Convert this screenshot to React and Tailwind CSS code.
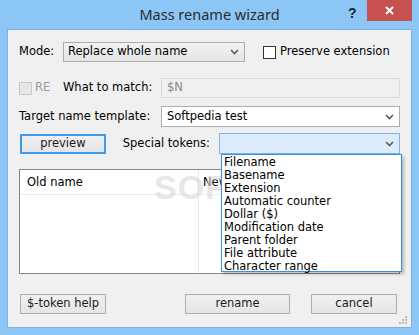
import React from 'react';

const font = { fontFamily: '"DejaVu Sans", Verdana, sans-serif' };

const Chevron = ({ className = '' }) => (
  <svg width="9" height="6" viewBox="0 0 9 6" className={className}>
    <path d="M1 1 L4.5 4.5 L8 1" fill="none" stroke="#5a5a5a" strokeWidth="1.6" />
  </svg>
);

const Check = ({ disabled }) => (
  <span
    className={`w-[13px] h-[13px] shrink-0 border ${disabled ? 'border-[#c8c8c8] bg-[#e6e6e6]' : 'border-[#333] bg-white'}`}
  />
);

const Btn = ({ children, className = '', focus }) => (
  <button
    className={`h-5 flex items-center justify-center text-[#1a1a1a] bg-gradient-to-b from-[#f0f0f0] to-[#e5e5e5] ${
      focus ? 'border-2 border-[#3c9af5]' : 'border border-[#adadad]'
    } ${className}`}
  >
    {children}
  </button>
);

const tokens = [
  'Filename',
  'Basename',
  'Extension',
  'Automatic counter',
  'Dollar ($)',
  'Modification date',
  'Parent folder',
  'File attribute',
  'Character range',
];

export default function App() {
  return (
    <div className="w-[419px] h-[335px] bg-[#8cc6f7] flex flex-col text-[11.5px] text-black overflow-hidden" style={font}>
      <div className="relative h-[29px] shrink-0 flex items-center justify-center">
        <span className="text-[14.5px] text-[#2b2b2b] mt-[1px]" style={{ fontFamily: '"Noto Sans", "Open Sans", sans-serif' }}>
          Mass rename wizard
        </span>
        <span className="absolute left-[348px] top-[3px] text-[14px] font-bold text-[#222]" style={{ fontFamily: '"Liberation Sans", Arial, sans-serif' }}>
          ?
        </span>
        <div className="absolute left-[367px] top-0 w-[45px] h-[21px] bg-[#c75050] flex items-center justify-center">
          <svg width="9" height="9" viewBox="0 0 9 9">
            <path d="M1 1 L8 8 M8 1 L1 8" stroke="#fff" strokeWidth="2" />
          </svg>
        </div>
      </div>

      <div className="relative mx-[7px] h-[299px] border border-[#7bb1e3] bg-[#f0f0f0] px-[11px] pt-[12px] flex flex-col">
        {/* Row 1 */}
        <div className="flex items-center h-5">
          <span className="w-[44px]">Mode:</span>
          <div className="w-[182px] h-5 border border-[#acacac] bg-gradient-to-b from-[#f2f2f2] to-[#e5e5e5] flex items-center justify-between pl-[4px] pr-[5px]">
            <span>Replace whole name</span>
            <Chevron />
          </div>
          <div className="flex items-center ml-[18px] gap-[4px]">
            <Check />
            <span>Preserve extension</span>
          </div>
        </div>

        {/* Row 2 */}
        <div className="flex items-center h-5 mt-4">
          <Check disabled />
          <span className="ml-[3px] w-[28px] text-[#9a9a9a]">RE</span>
          <span className="w-[98px]">What to match:</span>
          <div className="w-[239px] h-5 border border-[#d9d9d9] bg-[#f0f0f0] flex items-center pl-[5px] text-[#8a8a8a]">$N</div>
        </div>

        {/* Row 3 */}
        <div className="flex items-center h-[21px] mt-2">
          <span className="w-[142px]">Target name template:</span>
          <div className="w-[239px] h-[21px] border border-[#abadb3] bg-white flex items-center justify-between pl-[5px] pr-[5px]">
            <span>Softpedia test</span>
            <Chevron />
          </div>
        </div>

        {/* Row 4 */}
        <div className="flex items-center h-[21px] mt-[6px]">
          <Btn focus className="ml-[1px] w-[86px]">preview</Btn>
          <span className="ml-[17px] w-[96px]">Special tokens:</span>
          <div className="w-[182px] h-[21px] border border-[#7eb4ea] bg-[#dcecfc] flex items-center justify-end pr-[5px]">
            <Chevron />
          </div>
        </div>

        {/* List */}
        <div className="mt-[15px] w-[381px] h-[105px] border border-[#828790] bg-white flex flex-col">
          <div className="h-[25px] flex border-b border-[#e5eef7]">
            <div className="w-[179px] border-r border-[#e5eef7] flex items-center pl-[7px] pt-[2px]">Old name</div>
            <div className="flex-1 flex items-center pl-[4px] pt-[2px] whitespace-nowrap">New name</div>
          </div>
          <div className="flex-1 flex">
            <div className="w-[179px] border-r border-[#e5eef7]" />
          </div>
        </div>

        {/* Bottom buttons */}
        <div className="flex items-center h-5 mt-5">
          <Btn className="ml-[1px] w-[86px]">$-token help</Btn>
          <Btn className="ml-[79px] w-[105px]">rename</Btn>
          <Btn className="ml-[21px] w-[86px]">cancel</Btn>
        </div>

        {/* watermark */}
        <div
          className="absolute left-[146px] top-[132px] text-[34px] font-bold tracking-[1px] text-[#d8d8d8]/60 pointer-events-none"
          style={{ fontFamily: '"Liberation Sans", Arial, sans-serif' }}
        >
          SOFTPEDIA
        </div>

        {/* gripper */}
        <svg className="absolute right-[4px] bottom-[3px]" width="8" height="8" viewBox="0 0 8 8">
          <rect x="6" y="0" width="2" height="2" fill="#bcbcbc" />
          <rect x="3" y="3" width="2" height="2" fill="#bcbcbc" />
          <rect x="6" y="3" width="2" height="2" fill="#bcbcbc" />
          <rect x="0" y="6" width="2" height="2" fill="#bcbcbc" />
          <rect x="3" y="6" width="2" height="2" fill="#bcbcbc" />
          <rect x="6" y="6" width="2" height="2" fill="#bcbcbc" />
        </svg>

        {/* dropdown list */}
        <div className="absolute left-[213px] top-[124px] w-[181px] h-[118px] bg-white border border-[#3d8ee0] shadow-[2px_2px_3px_rgba(0,0,0,0.25)] flex flex-col pl-[2px] leading-[13px] pt-[1px]">
          {tokens.map((t) => (
            <div key={t} className="h-[13px]">{t}</div>
          ))}
        </div>
      </div>
    </div>
  );
}
